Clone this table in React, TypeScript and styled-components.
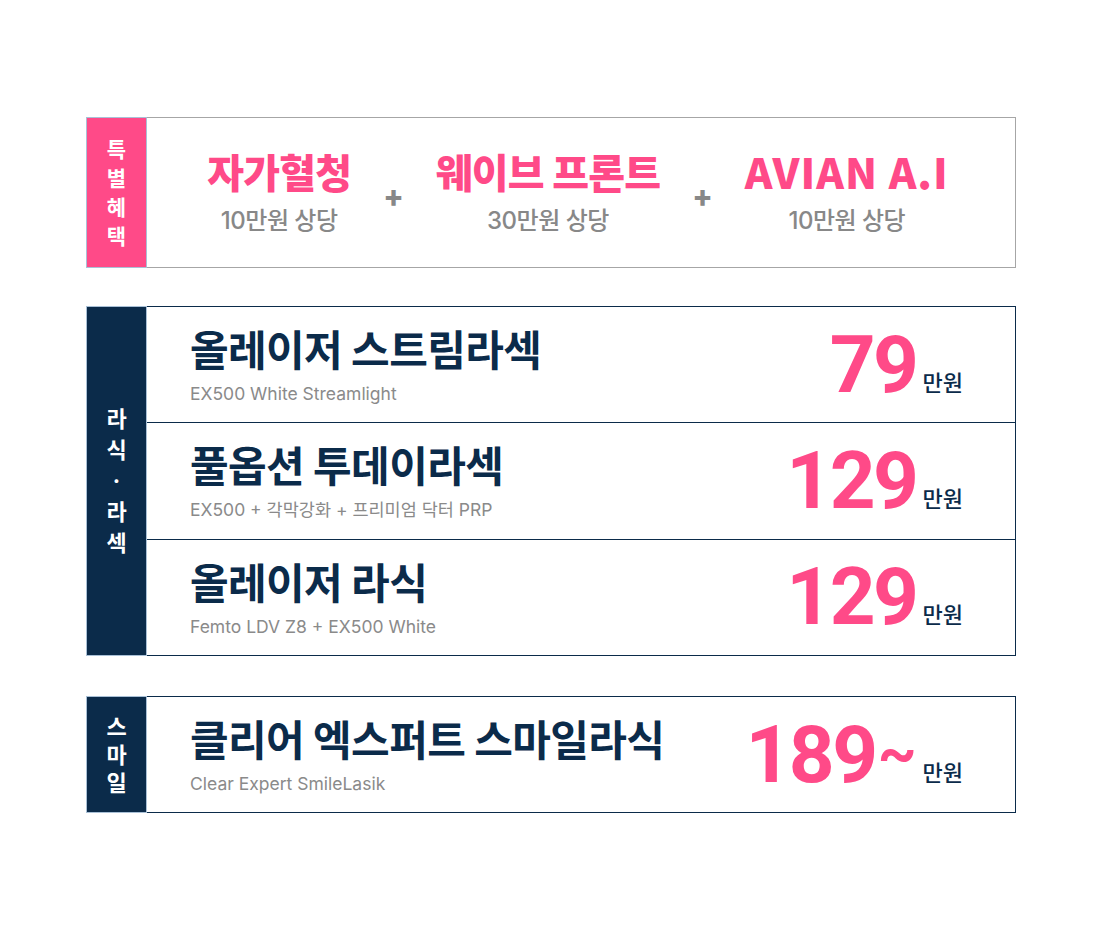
import React from "react";
import styled, { createGlobalStyle } from "styled-components";

const PINK = "#ff4a88";
const NAVY = "#0b2b4a";

const Global = createGlobalStyle`
  html, body { margin: 0; padding: 0; background: #fff; }
  body { font-family: Inter, "Noto Sans CJK KR", sans-serif; }
`;

const Page = styled.div`
  padding: 117px 0 0 86px;
  display: flex;
  flex-direction: column;
  width: 930px;
`;

const Box = styled.div<{ $border: string; $h: number; $gap: number }>`
  display: flex;
  height: ${(p) => p.$h}px;
  margin-top: ${(p) => p.$gap}px;
  box-sizing: border-box;
  border: 1px solid ${(p) => p.$border};
`;

const Label = styled.div<{ $bg: string; $lh: number; $size: number }>`
  width: 61px;
  flex: none;
  box-sizing: border-box;
  margin: -1px 0 -1px -1px;
  border: 1px solid #a9c0d6;
  background: ${(p) => p.$bg};
  color: #fff;
  display: flex;
  flex-direction: column;
  align-items: center;
  justify-content: center;
  font-family: Inter, "Noto Sans CJK KR", sans-serif;
  font-weight: 700;
  font-size: ${(p) => p.$size}px;
  line-height: ${(p) => p.$lh}px;
`;

const Benefits = styled.div`
  flex: 1;
  display: flex;
  align-items: center;
  justify-content: center;
  gap: 32px;
  padding-right: 6px;
`;

const Benefit = styled.div`
  display: flex;
  flex-direction: column;
  align-items: center;
  margin-top: -3px;
`;

const BenefitTitle = styled.div<{ $latin?: boolean }>`
  font-family: "Noto Sans CJK KR", sans-serif;
  font-weight: ${(p) => (p.$latin ? 900 : 800)};
  font-size: ${(p) => (p.$latin ? 42 : 40)}px;
  letter-spacing: ${(p) => (p.$latin ? 1 : -0.8)}px;
  line-height: 46px;
  color: ${PINK};
  white-space: nowrap;
`;

const BenefitSub = styled.div`
  margin-top: 13px;
  font-family: Inter, "Noto Sans CJK KR", sans-serif;
  font-weight: 500;
  font-size: 24px;
  line-height: 28px;
  color: #888888;
  letter-spacing: -0.5px;
`;

const Plus = styled.div`
  font-family: Inter, sans-serif;
  font-weight: 800;
  font-size: 30px;
  line-height: 30px;
  color: #888888;
  margin-top: 6px;
`;

const Rows = styled.div`
  flex: 1;
  display: flex;
  flex-direction: column;
`;

const Row = styled.div`
  flex: 1;
  display: flex;
  align-items: center;
  justify-content: space-between;
  padding: 0 52px 0 43px;
  & + & {
    border-top: 1px solid ${NAVY};
  }
`;

const Info = styled.div`
  display: flex;
  flex-direction: column;
`;

const Title = styled.div`
  font-family: "Noto Sans CJK KR", sans-serif;
  font-weight: 700;
  font-size: 42px;
  letter-spacing: -0.6px;
  line-height: 48px;
  color: ${NAVY};
  white-space: nowrap;
`;

const Sub = styled.div`
  margin-top: 11px;
  font-family: Inter, "Noto Sans CJK KR", sans-serif;
  font-size: 17.5px;
  line-height: 22px;
  color: #8a8a8a;
`;

const Price = styled.div`
  white-space: nowrap;
  font-family: Roboto, sans-serif;
  font-weight: 700;
  font-size: 80px;
  line-height: 80px;
  color: ${PINK};
`;

const Num = styled.span`
  letter-spacing: -2.5px;
`;

const Tilde = styled.span`
  font-size: 60px;
  line-height: 1;
  vertical-align: 9px;
  margin-left: 2px;
`;

const Unit = styled.span`
  margin-left: 6px;
  font-family: "Noto Sans CJK KR", sans-serif;
  font-weight: 500;
  font-size: 22px;
  line-height: 1;
  color: ${NAVY};
  vertical-align: 1px;
`;

type Item = { title: string; sub: string; price: string; from?: boolean };

const lasik: Item[] = [
  { title: "올레이저 스트림라섹", sub: "EX500 White Streamlight", price: "79" },
  { title: "풀옵션 투데이라섹", sub: "EX500 + 각막강화 + 프리미엄 닥터 PRP", price: "129" },
  { title: "올레이저 라식", sub: "Femto LDV Z8 + EX500 White", price: "129" },
];

const smile: Item[] = [
  { title: "클리어 엑스퍼트 스마일라식", sub: "Clear Expert SmileLasik", price: "189", from: true },
];

const VLabel = ({ chars, bg, lh, size }: { chars: string[]; bg: string; lh: number; size: number }) => (
  <Label $bg={bg} $lh={lh} $size={size}>
    {chars.map((c, i) => (
      <span key={i}>{c}</span>
    ))}
  </Label>
);

const ItemRows = ({ items }: { items: Item[] }) => (
  <Rows>
    {items.map((it) => (
      <Row key={it.title}>
        <Info>
          <Title>{it.title}</Title>
          <Sub>{it.sub}</Sub>
        </Info>
        <Price>
          <Num>{it.price}</Num>
          {it.from && <Tilde>~</Tilde>}
          <Unit>만원</Unit>
        </Price>
      </Row>
    ))}
  </Rows>
);

export default function App() {
  return (
    <>
      <Global />
      <Page>
        <Box $border="#a6a6a6" $h={151} $gap={0}>
          <VLabel chars={["특", "별", "혜", "택"]} bg={PINK} lh={29} size={21} />
          <Benefits>
            <Benefit>
              <BenefitTitle>자가혈청</BenefitTitle>
              <BenefitSub>10만원 상당</BenefitSub>
            </Benefit>
            <Plus>+</Plus>
            <Benefit>
              <BenefitTitle>웨이브 프론트</BenefitTitle>
              <BenefitSub>30만원 상당</BenefitSub>
            </Benefit>
            <Plus>+</Plus>
            <Benefit>
              <BenefitTitle $latin>AVIAN A.I</BenefitTitle>
              <BenefitSub>10만원 상당</BenefitSub>
            </Benefit>
          </Benefits>
        </Box>
        <Box $border={NAVY} $h={350} $gap={38}>
          <VLabel chars={["라", "식", "·", "라", "섹"]} bg={NAVY} lh={31} size={22} />
          <ItemRows items={lasik} />
        </Box>
        <Box $border={NAVY} $h={117} $gap={40}>
          <VLabel chars={["스", "마", "일"]} bg={NAVY} lh={28} size={22} />
          <ItemRows items={smile} />
        </Box>
      </Page>
    </>
  );
}
